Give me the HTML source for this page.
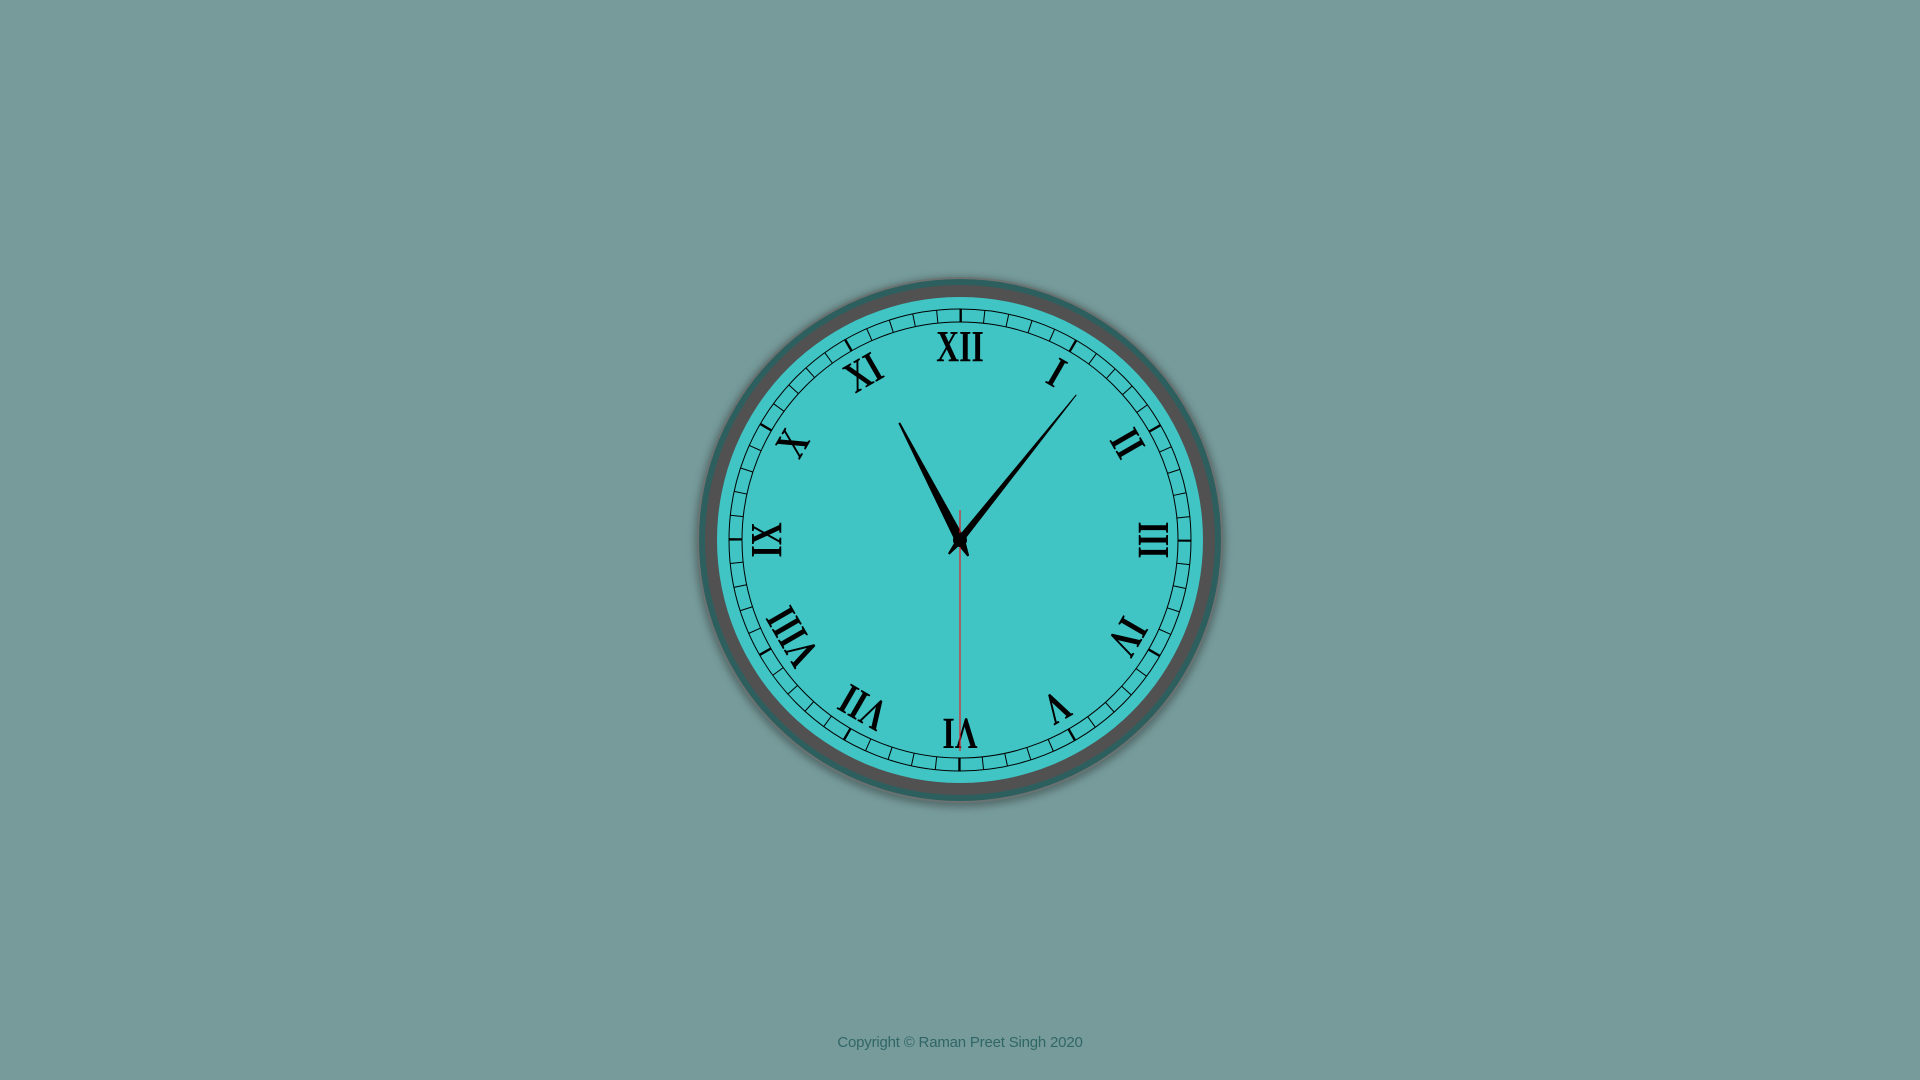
<!DOCTYPE html>
<html><head><meta charset="utf-8"><style>
html,body{margin:0;padding:0;width:1920px;height:1080px;background:#779b9b;overflow:hidden}
svg{position:absolute;left:0;top:0}
.c{position:absolute;left:0;width:1920px;top:1034px;text-align:center;font-family:"Comic Sans MS","Liberation Sans",sans-serif;font-size:15px;color:#316666;letter-spacing:-0.2px}
</style></head><body>
<svg width="1920" height="1080" viewBox="0 0 1920 1080">
<defs>
<filter id="sh" x="-20%" y="-20%" width="140%" height="140%"><feGaussianBlur stdDeviation="4"/></filter>
</defs>
<circle cx="960" cy="542" r="265" fill="#3a4a4a" opacity="0.6" filter="url(#sh)"/>
<circle cx="960" cy="540" r="263" fill="#6a7272"/>
<circle cx="960" cy="540" r="261" fill="#2d5f5f"/>
<circle cx="960" cy="540" r="255" fill="#515151"/>
<circle cx="960" cy="540" r="243" fill="#40c4c4"/>
<circle cx="960" cy="540" r="231" fill="none" stroke="#000" stroke-width="1"/>
<circle cx="960" cy="540" r="218" fill="none" stroke="#000" stroke-width="1"/>
<circle cx="960" cy="540" r="224.5" fill="none" stroke="#000" stroke-width="13" stroke-dasharray="1 22.5103"/>
<circle cx="960" cy="540" r="224.5" fill="none" stroke="#000" stroke-width="13" stroke-dasharray="2.4 115.15" stroke-dashoffset="0.7"/>
<g font-family="'Liberation Serif',serif" font-weight="bold" font-size="44" text-anchor="middle" fill="#000" transform="translate(960,540)">
<text transform="rotate(0) translate(0,-179) scale(0.72,1)">XII</text>
<text transform="rotate(30) translate(0,-179) scale(0.72,1)">I</text>
<text transform="rotate(60) translate(0,-179) scale(0.72,1)">II</text>
<text transform="rotate(90) translate(0,-179) scale(0.72,1)">III</text>
<text transform="rotate(120) translate(0,-179) scale(0.72,1)">IV</text>
<text transform="rotate(150) translate(0,-179) scale(0.72,1)">V</text>
<text transform="rotate(180) translate(0,-179) scale(0.72,1)">VI</text>
<text transform="rotate(210) translate(0,-179) scale(0.72,1)">VII</text>
<text transform="rotate(240) translate(0,-179) scale(0.72,1)">VIII</text>
<text transform="rotate(270) translate(0,-179) scale(0.72,1)">IX</text>
<text transform="rotate(300) translate(0,-179) scale(0.72,1)">X</text>
<text transform="rotate(330) translate(0,-179) scale(0.72,1)">XI</text>
</g>
<g transform="translate(960,540)">
<path transform="rotate(-27.4)" d="M-5,0 L-1,-132 L1,-132 L5,0 L1,18 L-1,18 Z" fill="#000"/>
<path transform="rotate(38.7)" d="M-3.5,0 L-0.5,-186 L0.5,-186 L3.5,0 L1,18 L-1,18 Z" fill="#000"/>
<line x1="0" y1="-30" x2="0" y2="211" stroke="#e0202a" stroke-width="1.2"/>
<circle r="7" fill="#000"/>
</g>
</svg>
<div class="c">Copyright © Raman Preet Singh 2020</div>
</body></html>
